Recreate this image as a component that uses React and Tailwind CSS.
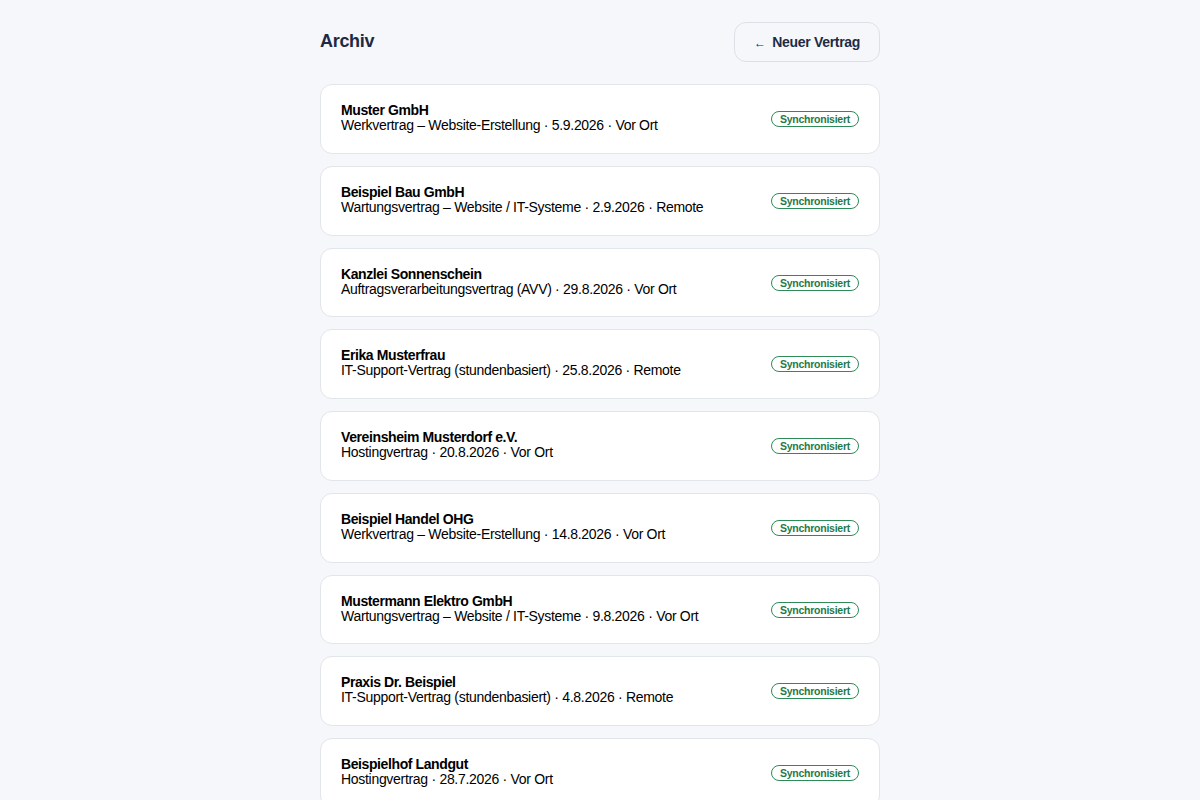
import React from 'react';

const contracts = [
  { id: 1, client: 'Muster GmbH', type: 'Werkvertrag – Website-Erstellung', date: '5.9.2026', mode: 'Vor Ort' },
  { id: 2, client: 'Beispiel Bau GmbH', type: 'Wartungsvertrag – Website / IT-Systeme', date: '2.9.2026', mode: 'Remote' },
  { id: 3, client: 'Kanzlei Sonnenschein', type: 'Auftragsverarbeitungsvertrag (AVV)', date: '29.8.2026', mode: 'Vor Ort' },
  { id: 4, client: 'Erika Musterfrau', type: 'IT-Support-Vertrag (stundenbasiert)', date: '25.8.2026', mode: 'Remote' },
  { id: 5, client: 'Vereinsheim Musterdorf e.V.', type: 'Hostingvertrag', date: '20.8.2026', mode: 'Vor Ort' },
  { id: 6, client: 'Beispiel Handel OHG', type: 'Werkvertrag – Website-Erstellung', date: '14.8.2026', mode: 'Vor Ort' },
  { id: 7, client: 'Mustermann Elektro GmbH', type: 'Wartungsvertrag – Website / IT-Systeme', date: '9.8.2026', mode: 'Vor Ort' },
  { id: 8, client: 'Praxis Dr. Beispiel', type: 'IT-Support-Vertrag (stundenbasiert)', date: '4.8.2026', mode: 'Remote' },
  { id: 9, client: 'Beispielhof Landgut', type: 'Hostingvertrag', date: '28.7.2026', mode: 'Vor Ort' },
  { id: 10, client: 'Musterschule Nord', type: 'Wartungsvertrag – Website / IT-Systeme', date: '21.7.2026', mode: 'Remote' },
];

const ContractCard = ({ contract }) => (
  <div className="flex items-center justify-between rounded-xl border border-[#e2e5ea] bg-white px-5 pt-[18px] pb-[19.75px]">
    <div className="leading-[15px]">
      <div className="text-[14px] font-bold tracking-[-0.4px] text-black">{contract.client}</div>
      <div className="text-[14px] tracking-[-0.3px] text-black">
        {contract.type} · {contract.date} · {contract.mode}
      </div>
    </div>
    <span className="mt-[2px] rounded-full border border-[#2e8b57] px-[8px] py-[1px] text-[10.5px] font-bold leading-[12px] tracking-[-0.25px] text-[#1f7a47]">
      Synchronisiert
    </span>
  </div>
);

const Archive = () => {
  return (
    <div
      className="min-h-screen bg-[#f5f7fa]"
      style={{ fontFamily: '"Liberation Sans", Arial, sans-serif' }}
    >
      <div className="mx-auto w-[560px] pt-[22px]">
        <div className="mb-[22px] flex items-center justify-between">
          <h1 className="-mt-[2px] text-[18px] font-bold tracking-[-0.3px] text-[#1e2a44]">Archiv</h1>
          <button
            type="button"
            className="h-[40px] w-[146px] rounded-xl border border-[#dde1e7] bg-[#f5f7fa] text-[14px] font-bold tracking-[-0.3px] text-[#1e2a44]"
          >
            <span className="mr-[3px] text-[12px] font-normal">←</span> Neuer Vertrag
          </button>
        </div>
        <div className="flex flex-col gap-3 pb-6">
          {contracts.map(c => (
            <ContractCard key={c.id} contract={c} />
          ))}
        </div>
      </div>
    </div>
  );
};

export default function App() {
  return <Archive />;
}
